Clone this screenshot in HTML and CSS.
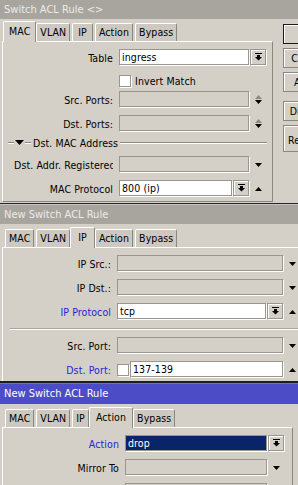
FILE: index.html
```html
<!DOCTYPE html>
<html lang="en">
<head>
  <meta charset="UTF-8">
  <title>Switch ACL Rule</title>
  <link rel="stylesheet" href="styles.css">
</head>
<body>

  <!-- Existing rule, MAC tab -->
  <div class="window win-1">
    <div class="titlebar">Switch ACL Rule &lt;&gt;</div>
    <div class="win-body">
      <div class="win-main">
        <div class="tabs">
          <div class="tab active">MAC</div>
          <div class="tab">VLAN</div>
          <div class="tab wide">IP</div>
          <div class="tab">Action</div>
          <div class="tab">Bypass</div>
        </div>
        <div class="panel">
          <div class="row">
            <div class="lbl">Table</div>
            <div class="field"><div class="input">ingress</div></div>
            <div class="extra"><span class="combo-btn"><svg width="7" height="8" viewBox="0 0 7 8"><path d="M0 0h7v1H0z M2 2h3v2h2L3.5 7.5 0 4h2z"/></svg></span></div>
          </div>
          <div class="row row-check">
            <div class="lbl"></div>
            <div class="field"><span class="check"></span><span>Invert Match</span></div>
            <div class="extra"></div>
          </div>
          <div class="row row-after-check">
            <div class="lbl">Src. Ports:</div>
            <div class="field"><div class="input off"></div></div>
            <div class="extra spin">
              <svg class="dim" width="7" height="4" viewBox="0 0 7 4"><path d="M0 4h7L3.5 0z"/></svg>
              <svg width="7" height="4" viewBox="0 0 7 4"><path d="M0 0h7L3.5 4z"/></svg>
            </div>
          </div>
          <div class="row">
            <div class="lbl">Dst. Ports:</div>
            <div class="field"><div class="input off"></div></div>
            <div class="extra spin">
              <svg class="dim" width="7" height="4" viewBox="0 0 7 4"><path d="M0 4h7L3.5 0z"/></svg>
              <svg width="7" height="4" viewBox="0 0 7 4"><path d="M0 0h7L3.5 4z"/></svg>
            </div>
          </div>
          <div class="group">
            <span class="group-line short"></span>
            <svg width="9" height="5" viewBox="0 0 9 5"><path d="M0 0h9L4.5 5z"/></svg>
            <span class="group-line short"></span>
            <span class="group-title">Dst. MAC Address</span>
            <span class="group-line"></span>
          </div>
          <div class="row row-after-group">
            <div class="lbl">Dst. Addr. Registered</div>
            <div class="field"><div class="input off"></div></div>
            <div class="extra"><svg width="7" height="4" viewBox="0 0 7 4"><path d="M0 0h7L3.5 4z"/></svg></div>
          </div>
          <div class="row">
            <div class="lbl">MAC Protocol</div>
            <div class="field">
              <div class="input">800 (ip)</div>
              <span class="combo-btn"><svg width="7" height="8" viewBox="0 0 7 8"><path d="M0 0h7v1H0z M2 2h3v2h2L3.5 7.5 0 4h2z"/></svg></span>
            </div>
            <div class="extra"><svg width="7" height="4" viewBox="0 0 7 4"><path d="M0 4h7L3.5 0z"/></svg></div>
          </div>
        </div>
      </div>
      <div class="side">
        <div class="btn default">OK</div>
        <div class="btn">Cancel</div>
        <div class="btn">Apply</div>
        <div class="btn spaced">Disable</div>
        <div class="btn tall">Remove</div>
      </div>
    </div>
  </div>

  <!-- New rule, IP tab -->
  <div class="window win-2">
    <div class="titlebar">New Switch ACL Rule</div>
    <div class="win-main">
      <div class="tabs">
        <div class="tab">MAC</div>
        <div class="tab">VLAN</div>
        <div class="tab wide active">IP</div>
        <div class="tab">Action</div>
        <div class="tab">Bypass</div>
      </div>
      <div class="panel">
        <div class="row">
          <div class="lbl">IP Src.:</div>
          <div class="field"><div class="input off"></div></div>
          <div class="extra"><svg width="7" height="4" viewBox="0 0 7 4"><path d="M0 0h7L3.5 4z"/></svg></div>
        </div>
        <div class="row">
          <div class="lbl">IP Dst.:</div>
          <div class="field"><div class="input off"></div></div>
          <div class="extra"><svg width="7" height="4" viewBox="0 0 7 4"><path d="M0 0h7L3.5 4z"/></svg></div>
        </div>
        <div class="row">
          <div class="lbl req">IP Protocol</div>
          <div class="field">
            <div class="input">tcp</div>
            <span class="combo-btn"><svg width="7" height="8" viewBox="0 0 7 8"><path d="M0 0h7v1H0z M2 2h3v2h2L3.5 7.5 0 4h2z"/></svg></span>
          </div>
          <div class="extra"><svg width="7" height="4" viewBox="0 0 7 4"><path d="M0 4h7L3.5 0z"/></svg></div>
        </div>
        <div class="divider"></div>
        <div class="row">
          <div class="lbl">Src. Port:</div>
          <div class="field"><div class="input off"></div></div>
          <div class="extra"><svg width="7" height="4" viewBox="0 0 7 4"><path d="M0 0h7L3.5 4z"/></svg></div>
        </div>
        <div class="row">
          <div class="lbl req">Dst. Port:</div>
          <div class="field tight"><span class="check"></span><div class="input">137-139</div></div>
          <div class="extra"><svg width="7" height="4" viewBox="0 0 7 4"><path d="M0 4h7L3.5 0z"/></svg></div>
        </div>
      </div>
    </div>
  </div>

  <!-- New rule, Action tab (focused window) -->
  <div class="window win-3">
    <div class="titlebar focused">New Switch ACL Rule</div>
    <div class="win-main">
      <div class="tabs">
        <div class="tab">MAC</div>
        <div class="tab">VLAN</div>
        <div class="tab">IP</div>
        <div class="tab roomy active">Action</div>
        <div class="tab">Bypass</div>
      </div>
      <div class="panel">
        <div class="row">
          <div class="lbl req">Action</div>
          <div class="field"><div class="input sel">drop</div></div>
          <div class="extra"><span class="combo-btn"><svg width="7" height="8" viewBox="0 0 7 8"><path d="M0 0h7v1H0z M2 2h3v2h2L3.5 7.5 0 4h2z"/></svg></span></div>
        </div>
        <div class="row">
          <div class="lbl">Mirror To</div>
          <div class="field"><div class="input off"></div></div>
          <div class="extra"><svg width="7" height="4" viewBox="0 0 7 4"><path d="M0 0h7L3.5 4z"/></svg></div>
        </div>
        <div class="row">
          <div class="lbl">Redirect To</div>
          <div class="field"><div class="input off"></div></div>
          <div class="extra"></div>
        </div>
      </div>
    </div>
  </div>

</body>
</html>
```

FILE: styles.css
```css
body {
  margin: 0;
  width: 298px;
  height: 485px;
  overflow: hidden;
  background: #d4d0c8;
  font-family: "DejaVu Sans Condensed", "DejaVu Sans", sans-serif;
  font-stretch: condensed;
  font-size: 10.5px;
  letter-spacing: 0.1px;
  color: #000;
}

/* windows */
.window {
  background: #d4d0c8;
  overflow: hidden;
}
.win-1 {
  height: 203px;
  --lw: 116px;
  --fw: 130px;
}
.win-2 {
  height: 177px;
  border-top: 1px solid #262626;
  --lw: 114px;
  --fw: 166px;
}
.win-3 {
  height: 102px;
  border-top: 2px solid #1c1c2c;
  --lw: 122px;
  --fw: 142px;
}

.titlebar {
  height: 19px;
  line-height: 19px;
  padding-left: 4px;
  background: #a8a59e;
  color: #ecebe7;
  font-size: 11px;
  letter-spacing: 0;
  white-space: nowrap;
}
.win-2 .titlebar {
  height: 20px;
  border-top: 1px solid #c6c3bc;
  box-sizing: border-box;
}
.titlebar.focused {
  height: 21px;
  line-height: 20px;
  border-top: 1px solid #6a6ad8;
  box-sizing: border-box;
  background: #4c4cc6;
  color: #fff;
}

.win-body {
  display: flex;
}
.win-main {
  padding-left: 2px;
}
.win-1 .win-main {
  width: 274px;
  box-sizing: border-box;
  flex-shrink: 0;
}

/* tabs */
.tabs {
  display: flex;
  align-items: flex-end;
  height: 20px;
  margin-top: 2px;
  padding-left: 3px;
  gap: 2px;
}
.win-2 .tabs,
.win-3 .tabs {
  margin-top: 3px;
}
.tab {
  height: 18px;
  line-height: 17px;
  padding: 0 3px;
  border: 1px solid #fff;
  border-right-color: #8a8781;
  border-bottom: none;
  border-radius: 2px 2px 0 0;
  background: #cdc9c1;
  box-sizing: border-box;
  white-space: nowrap;
}
.tab.wide {
  padding: 0 5px;
}
.tab.roomy {
  padding: 0 4px;
}
.tab.active {
  height: 21px;
  line-height: 18px;
  margin: 0 -2px -1px;
  padding: 0 5px;
  background: #d4d0c8;
  position: relative;
  z-index: 1;
}
.tab.wide.active {
  padding: 0 7px;
}
.tab.roomy.active {
  padding: 0 6px;
}

/* panel + form rows */
.panel {
  border: 1px solid #fff;
  border-right-color: #8a8781;
  border-bottom-color: #8a8781;
  padding-top: 7px;
  box-sizing: border-box;
}
.win-1 .panel {
  width: 271px;
  height: 161px;
}
.win-2 .panel {
  width: 330px;
  height: 140px;
}
.win-3 .panel {
  width: 291px;
  height: 80px;
}

.row {
  display: grid;
  grid-template-columns: var(--lw) var(--fw) 18px;
  align-items: center;
  height: 17px;
  margin-top: 7px;
}
.row:first-child {
  margin-top: 0;
}
.row-check {
  height: 13px;
  margin-top: 6px;
}
.row-after-check {
  margin-top: 6px;
}
.row-after-group {
  margin-top: 7px;
}

.lbl {
  margin-right: 6px;
  padding-left: 11px;
  text-align: right;
  white-space: nowrap;
  overflow: hidden;
}
.lbl.req {
  color: #2424d6;
}

.field {
  display: flex;
  align-items: center;
  gap: 4px;
  height: 17px;
}
.row-check .field {
  height: 13px;
}
.field .combo-btn {
  margin-left: -3px;
}
.field.tight {
  gap: 1px;
}

.input {
  flex: 1;
  height: 16px;
  align-self: flex-start;
  border: 1px solid #9a968f;
  box-shadow: 1px 1px 0 #fff;
  background: #fff;
  padding-left: 2px;
  line-height: 14px;
  box-sizing: border-box;
  white-space: nowrap;
  overflow: hidden;
}
.input.off {
  background: #d4d0c8;
}
.input.sel {
  background: #0a246a;
  color: #fff;
}

.check {
  width: 12px;
  height: 12px;
  flex-shrink: 0;
  border: 1px solid #9a968f;
  box-shadow: 1px 1px 0 #fff;
  background: #fff;
  box-sizing: border-box;
}

.combo-btn {
  display: flex;
  align-items: center;
  justify-content: center;
  width: 16px;
  height: 16px;
  flex-shrink: 0;
  align-self: flex-start;
  border: 1px solid #9a968f;
  box-shadow: inset 1px 1px 0 #fff, 1px 1px 0 #fff;
  background: #d4d0c8;
  box-sizing: border-box;
}
.extra .combo-btn {
  margin-left: 1px;
}

.extra {
  display: flex;
  flex-direction: column;
  align-items: center;
  justify-content: center;
  height: 17px;
}
.extra:has(.combo-btn) {
  align-items: flex-start;
  justify-content: flex-start;
}
.spin {
  gap: 1px;
}
.dim {
  fill: #8d8a84;
}

/* group header and divider */
.group {
  display: flex;
  align-items: center;
  height: 13px;
  margin: 4px 0 0 5px;
  width: 259px;
  gap: 1px;
}
.group-line {
  flex: 1;
  border-top: 1px solid #8a8781;
  border-bottom: 1px solid #fff;
}
.group-line.short {
  flex: 0 0 6px;
}
.group-title {
  padding: 0 1px;
  white-space: nowrap;
}
.divider {
  margin: 8px 0 0 7px;
  border-top: 1px solid #a9a59e;
  border-bottom: 1px solid #fff;
}

/* side buttons */
.side {
  display: flex;
  flex-direction: column;
  gap: 4px;
  margin-left: 9px;
  padding-top: 5px;
}
.btn {
  width: 49px;
  height: 20px;
  line-height: 18px;
  border: 1px solid #8a8781;
  box-shadow: inset 1px 1px 0 #fff;
  text-align: center;
  white-space: nowrap;
  box-sizing: border-box;
}
.btn.default {
  border-color: #1a1a1a;
}
.btn.spaced {
  margin-top: 5px;
}
.btn.tall {
  height: 27px;
  padding-top: 5px;
}
```
